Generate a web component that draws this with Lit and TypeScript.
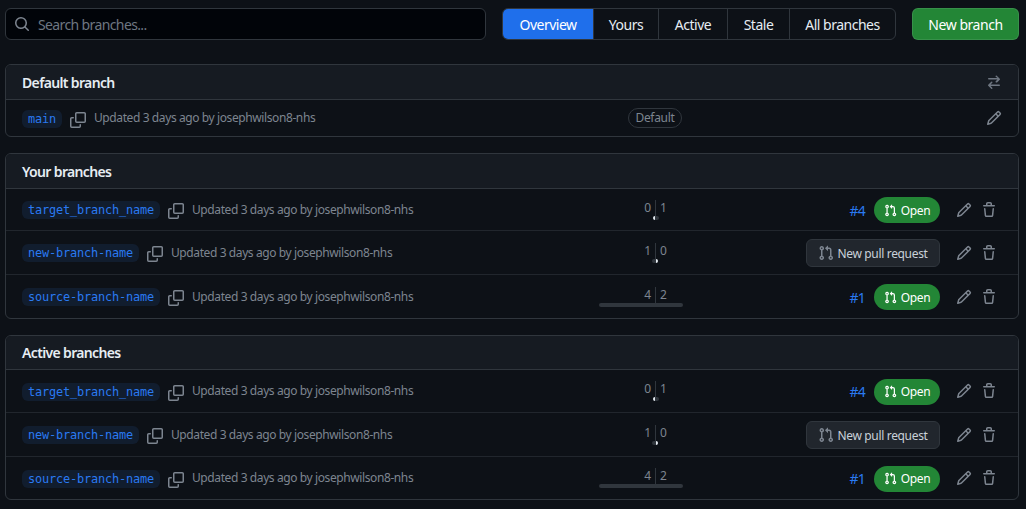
import { LitElement, css, html, svg } from "lit";
import { customElement } from "lit/decorators.js";

const icon = (d: string, size = 16) => html`<svg class="icon" width=${size} height=${size} viewBox="0 0 16 16" fill="currentColor">${svg`<path d=${d}></path>`}</svg>`;

const SEARCH = "M10.68 11.74a6 6 0 0 1-7.922-8.982 6 6 0 0 1 8.982 7.922l3.04 3.04a.749.749 0 0 1-.326 1.275.749.749 0 0 1-.734-.215ZM11.5 7a4.499 4.499 0 1 0-8.997 0A4.499 4.499 0 0 0 11.5 7Z";
const COPY = "M0 6.75C0 5.784.784 5 1.75 5h1.5a.75.75 0 0 1 0 1.5h-1.5a.25.25 0 0 0-.25.25v7.5c0 .138.112.25.25.25h7.5a.25.25 0 0 0 .25-.25v-1.5a.75.75 0 0 1 1.5 0v1.5A1.75 1.75 0 0 1 9.25 16h-7.5A1.75 1.75 0 0 1 0 14.25ZM5 1.75C5 .784 5.784 0 6.75 0h7.5C15.216 0 16 .784 16 1.75v7.5A1.75 1.75 0 0 1 14.25 11h-7.5A1.75 1.75 0 0 1 5 9.25Zm1.75-.25a.25.25 0 0 0-.25.25v7.5c0 .138.112.25.25.25h7.5a.25.25 0 0 0 .25-.25v-7.5a.25.25 0 0 0-.25-.25Z";
const PENCIL = "M11.013 1.427a1.75 1.75 0 0 1 2.474 0l1.086 1.086a1.75 1.75 0 0 1 0 2.474l-8.61 8.61c-.21.21-.47.364-.756.445l-3.251.93a.75.75 0 0 1-.927-.928l.929-3.25c.081-.286.235-.547.445-.758l8.61-8.61Zm.176 4.823L9.75 4.81l-6.286 6.287a.253.253 0 0 0-.064.108l-.558 1.953 1.953-.558a.253.253 0 0 0 .108-.064Zm1.238-3.763a.25.25 0 0 0-.354 0L10.811 3.75l1.439 1.44 1.263-1.263a.25.25 0 0 0 0-.354Z";
const TRASH = "M11 1.75V3h2.25a.75.75 0 0 1 0 1.5H2.75a.75.75 0 0 1 0-1.5H5V1.75C5 .784 5.784 0 6.75 0h2.5C10.216 0 11 .784 11 1.75ZM4.496 6.675l.66 6.6a.25.25 0 0 0 .249.225h5.19a.25.25 0 0 0 .249-.225l.66-6.6a.75.75 0 0 1 1.492.149l-.66 6.6A1.748 1.748 0 0 1 10.595 15h-5.19a1.75 1.75 0 0 1-1.741-1.575l-.66-6.6a.75.75 0 1 1 1.492-.15ZM6.5 1.75V3h3V1.75a.25.25 0 0 0-.25-.25h-2.5a.25.25 0 0 0-.25.25Z";
const PULL = "M1.5 3.25a2.25 2.25 0 1 1 3 2.122v5.256a2.251 2.251 0 1 1-1.5 0V5.372A2.25 2.25 0 0 1 1.5 3.25Zm5.677-.177L9.573.677A.25.25 0 0 1 10 .854V2.5h1A2.5 2.5 0 0 1 13.5 5v5.628a2.251 2.251 0 1 1-1.5 0V5a1 1 0 0 0-1-1h-1v1.646a.25.25 0 0 1-.427.177L7.177 3.427a.25.25 0 0 1 0-.354ZM3.75 2.5a.75.75 0 1 0 0 1.5.75.75 0 0 0 0-1.5Zm0 9.5a.75.75 0 1 0 0 1.5.75.75 0 0 0 0-1.5Zm8.25.75a.75.75 0 1 0 1.5 0 .75.75 0 0 0-1.5 0Z";
const SWITCH = "M5.22 14.78a.75.75 0 0 0 1.06-1.06L4.56 12h8.69a.75.75 0 0 0 0-1.5H4.56l1.72-1.72a.75.75 0 0 0-1.06-1.06l-3 3a.75.75 0 0 0 0 1.06l3 3Zm5.56-6.5a.75.75 0 1 1-1.06-1.06l1.72-1.72H2.75a.75.75 0 0 1 0-1.5h8.69L9.72 2.78a.75.75 0 0 1 1.06-1.06l3 3a.75.75 0 0 1 0 1.06l-3 3Z";

interface Branch {
  name: string;
  behind: number;
  ahead: number;
  behindBar: number;
  aheadBar: number;
  pr?: string;
}

const BRANCHES: Branch[] = [
  { name: "target_branch_name", behind: 0, ahead: 1, behindBar: 2, aheadBar: 3, pr: "#4" },
  { name: "new-branch-name", behind: 1, ahead: 0, behindBar: 3, aheadBar: 2 },
  { name: "source-branch-name", behind: 4, ahead: 2, behindBar: 56, aheadBar: 27, pr: "#1" },
];

const TABS = ["Overview", "Yours", "Active", "Stale", "All branches"];

@customElement("app-root")
export class AppRoot extends LitElement {
  private meta(name: string) {
    return html`
      <div class="meta">
        <span class="name">${name}</span>
        <span class="copy">${icon(COPY)}</span>
        <span class="updated">Updated 3 days ago by josephwilson8-nhs</span>
      </div>
    `;
  }

  private row(b: Branch, height: number) {
    return html`
      <div class="row" style="height:${height}px">
        ${this.meta(b.name)}
        <div class="counts">
          <div class="nums"><span class="behind">${b.behind}</span><span class="ahead">${b.ahead}</span></div>
          <div class="bars">
            <span class="side left"><i class=${b.behind ? "dark" : "light"} style="width:${b.behindBar}px"></i></span>
            <span class="side"><i class=${b.ahead ? "dark" : "light"} style="width:${b.aheadBar}px"></i></span>
          </div>
        </div>
        <div class="pr">
          ${b.pr
            ? html`<a class="num">${b.pr}</a><span class="open">${icon(PULL, 13)}Open</span>`
            : html`<span class="new-pr">${icon(PULL)}New pull request</span>`}
        </div>
        <div class="actions">${icon(PENCIL)}${icon(TRASH)}</div>
      </div>
    `;
  }

  private section(title: string, headHeight: number, heights: number[]) {
    return html`
      <section>
        <header style="height:${headHeight}px">${title}</header>
        ${BRANCHES.map((b, i) => this.row(b, heights[i]))}
      </section>
    `;
  }

  render() {
    return html`
      <div class="top">
        <div class="search">${icon(SEARCH)}<span>Search branches...</span></div>
        <nav>
          ${TABS.map((t, i) => html`<a class=${i === 0 ? "selected" : ""}>${t}</a>`)}
        </nav>
        <button>New branch</button>
      </div>

      <section class="default">
        <header>Default branch <span class="switch">${icon(SWITCH)}</span></header>
        <div class="row default-row">
          ${this.meta("main")}
          <div class="label-cell"><span class="label">Default</span></div>
          <div class="actions single">${icon(PENCIL)}</div>
        </div>
      </section>

      ${this.section("Your branches", 34, [41, 43, 43])}
      ${this.section("Active branches", 33, [42, 43, 42])}
    `;
  }

  static styles = css`
    :host {
      display: block;
      box-sizing: border-box;
      height: 509px;
      padding: 8px 7px 0 5px;
      background: #0d1117;
      color: #e6edf3;
      font-family: "Noto Sans", sans-serif;
      font-size: 14px;
      overflow: hidden;
    }

    .icon {
      display: block;
      flex: none;
    }

    .top {
      display: flex;
      gap: 16px;
      height: 32px;
    }

    .search {
      flex: 1;
      display: flex;
      align-items: center;
      gap: 8px;
      padding-left: 8px;
      background: #010409;
      border: 1px solid #30363d;
      border-radius: 6px;
      color: #6e7681;
      letter-spacing: -0.62px;
    }

    .search .icon {
      color: #7d8590;
    }

    nav {
      display: grid;
      grid-template-columns: 90px 65px 69px 62px 106px;
      border: 1px solid #30363d;
      border-radius: 6px;
      overflow: hidden;
    }

    nav a {
      display: flex;
      align-items: center;
      justify-content: center;
      box-sizing: border-box;
      border-left: 1px solid #30363d;
      letter-spacing: -0.5px;
    }

    nav a:first-child {
      border-left: none;
    }

    nav a.selected {
      background: #1f6feb;
      color: #fff;
    }

    button {
      width: 107px;
      padding: 0;
      background: #238636;
      border: 1px solid rgba(240, 246, 252, 0.1);
      border-radius: 6px;
      color: #fff;
      font: inherit;
      letter-spacing: -0.45px;
    }

    section {
      margin-top: 16px;
      border: 1px solid #30363d;
      border-radius: 6px;
      overflow: hidden;
    }

    section.default {
      margin-top: 24px;
    }

    header {
      display: flex;
      justify-content: space-between;
      align-items: center;
      height: 34px;
      padding: 0 16px;
      background: #161b22;
      border-bottom: 1px solid #30363d;
      font-weight: 600;
      letter-spacing: -0.65px;
    }

    .switch {
      color: #6e7681;
    }

    .row {
      display: grid;
      grid-template-columns: 560px 148px 210px 1fr;
      align-items: center;
      padding-left: 16px;
      border-top: 1px solid #21262d;
    }

    header + .row {
      border-top: none;
    }

    .default-row {
      height: 36px;
      grid-template-columns: 580px 106px 1fr;
    }

    .meta {
      display: flex;
      align-items: center;
      gap: 8px;
    }

    .name {
      height: 18px;
      padding: 0 6px;
      margin-top: 1px;
      background: rgba(56, 139, 253, 0.1);
      border-radius: 6px;
      color: #2a7af2;
      font-family: "DejaVu Sans Mono", monospace;
      font-size: 11.9px;
      letter-spacing: -0.16px;
      line-height: 18px;
    }

    .copy {
      margin-top: 3px;
      color: #7d8590;
    }

    .updated,
    .label {
      color: #7d8590;
      font-size: 12px;
      letter-spacing: -0.4px;
    }

    .updated {
      margin-top: -1px;
    }

    .counts {
      display: flex;
      flex-direction: column;
      color: #7d8590;
      font-size: 12px;
    }

    .nums {
      display: grid;
      grid-template-columns: 1fr 1fr;
      line-height: 16px;
    }

    .nums span {
      padding: 0 4px;
    }

    .behind {
      text-align: right;
      border-right: 1px solid #30363d;
    }

    .bars {
      display: grid;
      grid-template-columns: 1fr 1fr;
      height: 4px;
    }

    .side {
      display: flex;
    }

    .side.left {
      justify-content: flex-end;
      border-right: 1px solid #30363d;
    }

    .side i {
      display: block;
      height: 4px;
      border-radius: 0 2px 2px 0;
    }

    .side.left i {
      border-radius: 2px 0 0 2px;
    }

    .dark {
      background: #30363d;
    }

    .light {
      background: #e6edf3;
    }

    .pr {
      display: flex;
      justify-content: flex-end;
      align-items: center;
      gap: 9px;
      margin-top: 1px;
    }

    .num {
      color: #2a7af2;
      letter-spacing: -0.8px;
    }

    .open {
      display: flex;
      align-items: center;
      justify-content: center;
      gap: 4px;
      width: 66px;
      height: 26px;
      background: #238636;
      border-radius: 13px;
      color: #fff;
      font-size: 12px;
      letter-spacing: -0.3px;
    }

    .new-pr {
      display: flex;
      align-items: center;
      justify-content: center;
      gap: 3px;
      box-sizing: border-box;
      width: 134px;
      height: 28px;
      background: #21262d;
      border: 1px solid #30363d;
      border-radius: 6px;
      color: #c9d1d9;
      font-size: 12px;
      letter-spacing: -0.33px;
    }

    .new-pr .icon {
      color: #7d8590;
    }

    .actions {
      display: flex;
      gap: 9px;
      padding-left: 16px;
      color: #7d8590;
    }

    .actions.single {
      justify-content: flex-end;
      padding-right: 16px;
    }

    .label-cell {
      display: flex;
      justify-content: center;
    }

    .label {
      box-sizing: border-box;
      width: 54px;
      padding: 0;
      border: 1px solid #30363d;
      border-radius: 2em;
      line-height: 18px;
      text-align: center;
      letter-spacing: -0.3px;
    }
  `;
}
